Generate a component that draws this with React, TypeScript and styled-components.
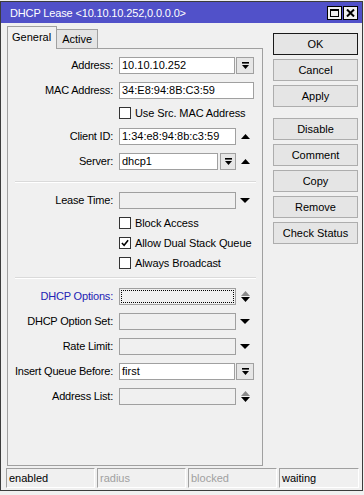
import React from 'react';
import styled, { createGlobalStyle } from 'styled-components';

const Global = createGlobalStyle`
  html, body { margin: 0; padding: 0; background: #f0f0f0; }
  body { font-family: "Liberation Sans", Arial, sans-serif; font-size: 11px; color: #000; }
  * { box-sizing: border-box; }
`;

const Page = styled.div`
  width: 364px;
  height: 495px;
  padding-top: 1px;
  background: #f0f0f0;
`;

const Window = styled.div`
  width: 363px;
  height: 490px;
  border: 1px solid #3c3c3c;
  display: flex;
  flex-direction: column;
  background: #f0f0f0;
`;

const TitleBar = styled.div`
  height: 21px;
  flex: none;
  background: #5151c9;
  color: #fff;
  display: flex;
  align-items: center;
  padding: 0 4px 0 9px;
`;

const TitleText = styled.div`
  flex: 1;
  white-space: nowrap;
  letter-spacing: -0.15px;
`;

const TitleButtons = styled.div`
  display: flex;
  gap: 1px;
`;

const TitleButton = styled.div`
  width: 15px;
  height: 14px;
  background: #f0f0f0;
  border: 1px solid #000;
  display: flex;
  align-items: center;
  justify-content: center;
`;

const Body = styled.div`
  flex: 1;
  display: flex;
  padding: 3px 4px 0 6px;
  min-height: 0;
`;

const LeftCol = styled.div`
  width: 256px;
  display: flex;
  flex-direction: column;
`;

const TabStrip = styled.div`
  height: 23px;
  margin-bottom: -1px;
  display: flex;
  align-items: flex-end;
  position: relative;
  z-index: 1;
`;

const Tab = styled.div<{ $active?: boolean }>`
  height: ${p => (p.$active ? 23 : 20)}px;
  padding: 0 5px 0 ${p => (p.$active ? 4 : 5)}px;
  margin-left: ${p => (p.$active ? 0 : -1)}px;
  border: 1px solid #a0a0a0;
  border-bottom: ${p => (p.$active ? 'none' : '1px solid #a0a0a0')};
  background: ${p => (p.$active ? '#f0f0f0' : '#e4e4e4')};
  line-height: ${p => (p.$active ? 21 : 18)}px;
  white-space: nowrap;
`;

const Panel = styled.div`
  flex: 1;
  border: 1px solid #a0a0a0;
  padding-top: 4px;
  display: flex;
  flex-direction: column;
`;

const Row = styled.div`
  height: 25px;
  padding-top: 4px;
  display: flex;
  align-items: flex-start;
`;

const Label = styled.div<{ $blue?: boolean }>`
  width: 105px;
  height: 17px;
  line-height: 17px;
  text-align: right;
  white-space: nowrap;
  letter-spacing: -0.2px;
  color: ${p => (p.$blue ? '#2323b4' : '#000')};
`;

const Control = styled.div`
  width: 135px;
  margin-left: 6px;
  display: flex;
  height: 17px;
`;

const Field = styled.div<{ $disabled?: boolean; $focus?: boolean }>`
  flex: 1;
  min-width: 0;
  height: 17px;
  border: 1px solid #a0a0a0;
  background: ${p => (p.$disabled ? '#f0f0f0' : '#fff')};
  padding: 0 2px;
  line-height: 15px;
  white-space: nowrap;
  overflow: hidden;
  outline: ${p => (p.$focus ? '1px dotted #000' : 'none')};
  outline-offset: -3px;
`;

const DropButton = styled.div<{ $w?: number }>`
  width: ${p => p.$w ?? 18}px;
  height: 17px;
  margin-left: ${p => (p.$w ? 2 : 1)}px;
  border: 1px solid #a0a0a0;
  background: #e6e6e6;
  display: flex;
  align-items: center;
  justify-content: center;
  flex: none;
`;

const ArrowZone = styled.div`
  width: 18px;
  height: 17px;
  display: flex;
  flex-direction: column;
  align-items: center;
  justify-content: center;
  gap: 1px;
  flex: none;
`;

const CheckRow = styled.div<{ $h?: number }>`
  height: ${p => p.$h ?? 20}px;
  padding: 4px 0 0 111px;
  display: flex;
  align-items: flex-start;
  gap: 4px;
  white-space: nowrap;
  letter-spacing: -0.1px;
`;

const Box = styled.div`
  width: 12px;
  height: 12px;
  border: 1px solid #333;
  background: #fff;
  display: flex;
  align-items: center;
  justify-content: center;
`;

const CheckText = styled.div`
  line-height: 12px;
`;

const Separator = styled.div<{ $top: number }>`
  height: 1px;
  background: #dadada;
  margin: ${p => p.$top}px 6px 6px 7px;
  box-shadow: 0 1px 0 #fff;
`;

const RightCol = styled.div`
  width: 85px;
  margin: 7px 0 0 10px;
  display: flex;
  flex-direction: column;
`;

const Button = styled.div<{ $default?: boolean; $gap?: number }>`
  height: 22px;
  margin-top: ${p => p.$gap ?? 0}px;
  border: 1px solid ${p => (p.$default ? '#1a1a1a' : '#adadad')};
  background: #e5e5e5;
  display: flex;
  align-items: center;
  justify-content: center;
  white-space: nowrap;
`;

const StatusBar = styled.div`
  flex: none;
  display: grid;
  grid-template-columns: 89px 89px 89px 1fr;
  gap: 2px;
  padding: 2px 3px 2px 5px;
`;

const StatusCell = styled.div<{ $dim?: boolean }>`
  height: 20px;
  border: 1px solid #a0a0a0;
  border-right-color: #fff;
  border-bottom-color: #fff;
  padding-left: 2px;
  line-height: 18px;
  color: ${p => (p.$dim ? '#a0a0a0' : '#000')};
`;

const DropIcon = () => (
  <svg width="9" height="9" viewBox="0 0 9 9">
    <rect x="1" y="1" width="7" height="1.6" fill="#000" />
    <polygon points="1,4 8,4 4.5,8" fill="#000" />
  </svg>
);

const Up = ({ color = '#000', w = 9 }: { color?: string; w?: number }) => (
  <svg width={w} height="5" viewBox={`0 0 ${w} 5`}>
    <polygon points={`0,5 ${w},5 ${w / 2},0`} fill={color} />
  </svg>
);

const Down = ({ color = '#000', w = 10 }: { color?: string; w?: number }) => (
  <svg width={w} height="5" viewBox={`0 0 ${w} 5`}>
    <polygon points={`0,0 ${w},0 ${w / 2},5`} fill={color} />
  </svg>
);

const Check = ({ checked }: { checked?: boolean }) => (
  <Box>
    {checked && (
      <svg width="8" height="8" viewBox="0 0 9 9">
        <polyline points="1,4.5 3.5,7 8,1.5" fill="none" stroke="#000" strokeWidth="1.8" />
      </svg>
    )}
  </Box>
);

export default function App() {
  return (
    <Page>
      <Global />
      <Window>
        <TitleBar>
          <TitleText>DHCP Lease &lt;10.10.10.252,0.0.0.0&gt;</TitleText>
          <TitleButtons>
            <TitleButton>
              <svg width="9" height="8" viewBox="0 0 9 8">
                <rect x="0.5" y="0.5" width="8" height="7" fill="none" stroke="#000" strokeWidth="1" />
                <rect x="0" y="0" width="9" height="2" fill="#000" />
              </svg>
            </TitleButton>
            <TitleButton>
              <svg width="9" height="8" viewBox="0 0 9 8">
                <path d="M1 0.5 L8 7.5 M8 0.5 L1 7.5" stroke="#000" strokeWidth="2" />
              </svg>
            </TitleButton>
          </TitleButtons>
        </TitleBar>
        <Body>
          <LeftCol>
            <TabStrip>
              <Tab $active>General</Tab>
              <Tab>Active</Tab>
            </TabStrip>
            <Panel>
              <Row>
                <Label>Address:</Label>
                <Control>
                  <Field>10.10.10.252</Field>
                  <DropButton><DropIcon /></DropButton>
                </Control>
              </Row>
              <Row>
                <Label>MAC Address:</Label>
                <Control>
                  <Field>34:E8:94:8B:C3:59</Field>
                </Control>
              </Row>
              <CheckRow $h={21}>
                <Check />
                <CheckText>Use Src. MAC Address</CheckText>
              </CheckRow>
              <Row>
                <Label>Client ID:</Label>
                <Control>
                  <Field>1:34:e8:94:8b:c3:59</Field>
                  <ArrowZone><Up /></ArrowZone>
                </Control>
              </Row>
              <Row>
                <Label>Server:</Label>
                <Control>
                  <Field>dhcp1</Field>
                  <DropButton $w={16}><DropIcon /></DropButton>
                  <ArrowZone><Up /></ArrowZone>
                </Control>
              </Row>
              <Separator $top={7} />
              <Row>
                <Label>Lease Time:</Label>
                <Control>
                  <Field $disabled />
                  <ArrowZone><Down /></ArrowZone>
                </Control>
              </Row>
              <CheckRow>
                <Check />
                <CheckText>Block Access</CheckText>
              </CheckRow>
              <CheckRow>
                <Check checked />
                <CheckText>Allow Dual Stack Queue</CheckText>
              </CheckRow>
              <CheckRow>
                <Check />
                <CheckText>Always Broadcast</CheckText>
              </CheckRow>
              <Separator $top={4} />
              <Row>
                <Label $blue>DHCP Options:</Label>
                <Control>
                  <Field $disabled $focus />
                  <ArrowZone>
                    <Up color="#8a8a8a" w={9} />
                    <Down w={9} />
                  </ArrowZone>
                </Control>
              </Row>
              <Row>
                <Label>DHCP Option Set:</Label>
                <Control>
                  <Field $disabled />
                  <ArrowZone><Down /></ArrowZone>
                </Control>
              </Row>
              <Row>
                <Label>Rate Limit:</Label>
                <Control>
                  <Field $disabled />
                  <ArrowZone><Down /></ArrowZone>
                </Control>
              </Row>
              <Row>
                <Label>Insert Queue Before:</Label>
                <Control>
                  <Field>first</Field>
                  <DropButton><DropIcon /></DropButton>
                </Control>
              </Row>
              <Row>
                <Label>Address List:</Label>
                <Control>
                  <Field $disabled />
                  <ArrowZone>
                    <Up color="#8a8a8a" w={9} />
                    <Down w={9} />
                  </ArrowZone>
                </Control>
              </Row>
            </Panel>
          </LeftCol>
          <RightCol>
            <Button $default>OK</Button>
            <Button $gap={4}>Cancel</Button>
            <Button $gap={4}>Apply</Button>
            <Button $gap={11}>Disable</Button>
            <Button $gap={4}>Comment</Button>
            <Button $gap={4}>Copy</Button>
            <Button $gap={4}>Remove</Button>
            <Button $gap={4}>Check Status</Button>
          </RightCol>
        </Body>
        <StatusBar>
          <StatusCell>enabled</StatusCell>
          <StatusCell $dim>radius</StatusCell>
          <StatusCell $dim>blocked</StatusCell>
          <StatusCell>waiting</StatusCell>
        </StatusBar>
      </Window>
    </Page>
  );
}
